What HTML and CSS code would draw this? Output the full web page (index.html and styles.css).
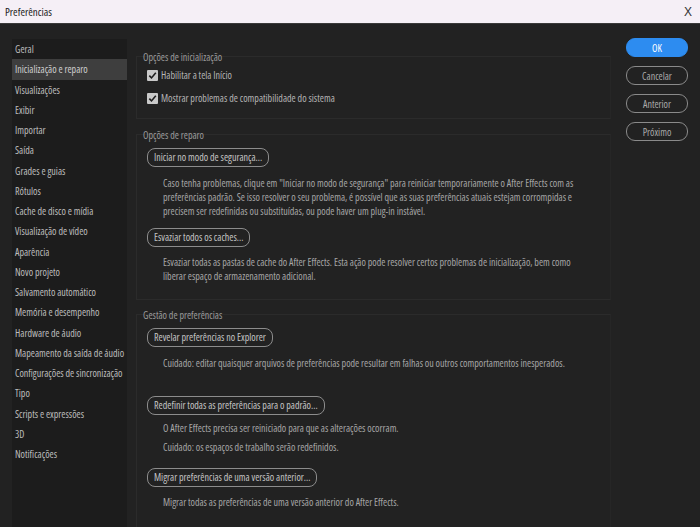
FILE: index.html
```html
<!DOCTYPE html>
<html lang="pt">
<head>
<meta charset="utf-8">
<title>Preferências</title>
<link rel="stylesheet" href="styles.css">
</head>
<body>
<div class="window">
  <header class="titlebar">
    <span class="title">Preferências</span>
    <span class="close">X</span>
  </header>
  <div class="content">
    <nav class="sidebar">
      <div class="nav-item">Geral</div>
      <div class="nav-item active">Inicialização e reparo</div>
      <div class="nav-item">Visualizações</div>
      <div class="nav-item">Exibir</div>
      <div class="nav-item">Importar</div>
      <div class="nav-item">Saída</div>
      <div class="nav-item">Grades e guias</div>
      <div class="nav-item">Rótulos</div>
      <div class="nav-item">Cache de disco e mídia</div>
      <div class="nav-item">Visualização de vídeo</div>
      <div class="nav-item">Aparência</div>
      <div class="nav-item">Novo projeto</div>
      <div class="nav-item">Salvamento automático</div>
      <div class="nav-item">Memória e desempenho</div>
      <div class="nav-item">Hardware de áudio</div>
      <div class="nav-item">Mapeamento da saída de áudio</div>
      <div class="nav-item">Configurações de sincronização</div>
      <div class="nav-item">Tipo</div>
      <div class="nav-item">Scripts e expressões</div>
      <div class="nav-item">3D</div>
      <div class="nav-item">Notificações</div>
    </nav>

    <main class="main">
      <section class="group group-startup">
        <h2 class="legend">Opções de inicialização</h2>
        <label class="check-row row-first"><span class="checkbox"><svg viewBox="0 0 11 11" width="11" height="11"><path d="M2.3 5.6 L4.5 7.9 L8.8 2.8" fill="none" stroke="#1e1e1e" stroke-width="1.6"/></svg></span>Habilitar a tela Início</label>
        <label class="check-row row-second"><span class="checkbox"><svg viewBox="0 0 11 11" width="11" height="11"><path d="M2.3 5.6 L4.5 7.9 L8.8 2.8" fill="none" stroke="#1e1e1e" stroke-width="1.6"/></svg></span>Mostrar problemas de compatibilidade do sistema</label>
      </section>

      <section class="group group-repair">
        <h2 class="legend">Opções de reparo</h2>
        <button class="pill pill-safe">Iniciar no modo de segurança...</button>
        <p class="desc desc-safe">Caso tenha problemas, clique em "Iniciar no modo de segurança" para reiniciar temporariamente o After Effects com as<br>preferências padrão. Se isso resolver o seu problema, é possível que as suas preferências atuais estejam corrompidas e<br>precisem ser redefinidas ou substituídas, ou pode haver um plug-in instável.</p>
        <button class="pill pill-cache">Esvaziar todos os caches...</button>
        <p class="desc desc-cache">Esvaziar todas as pastas de cache do After Effects. Esta ação pode resolver certos problemas de inicialização, bem como<br>liberar espaço de armazenamento adicional.</p>
      </section>

      <section class="group group-prefs">
        <h2 class="legend">Gestão de preferências</h2>
        <button class="pill pill-reveal">Revelar preferências no Explorer</button>
        <p class="desc desc-reveal">Cuidado: editar quaisquer arquivos de preferências pode resultar em falhas ou outros comportamentos inesperados.</p>
        <button class="pill pill-reset">Redefinir todas as preferências para o padrão...</button>
        <p class="desc desc-reset1">O After Effects precisa ser reiniciado para que as alterações ocorram.</p>
        <p class="desc desc-reset2">Cuidado: os espaços de trabalho serão redefinidos.</p>
        <button class="pill pill-migrate">Migrar preferências de uma versão anterior...</button>
        <p class="desc desc-migrate">Migrar todas as preferências de uma versão anterior do After Effects.</p>
      </section>
    </main>

    <aside class="actions">
      <button class="act act-primary">OK</button>
      <button class="act">Cancelar</button>
      <button class="act">Anterior</button>
      <button class="act">Próximo</button>
    </aside>
  </div>
</div>
</body>
</html>
```

FILE: styles.css
```css
* { box-sizing: border-box; }

html, body {
  margin: 0;
  padding: 0;
}

body {
  width: 700px;
  height: 527px;
  overflow: hidden;
  background: #222222;
  font-family: "Open Sans", "DejaVu Sans Condensed", sans-serif;
  font-stretch: 75%;
  font-size: 10px;
  color: #a8a8a8;
}

.window {
  display: flex;
  flex-direction: column;
  height: 527px;
}

.titlebar {
  height: 24px;
  flex: none;
  display: flex;
  align-items: center;
  justify-content: space-between;
  padding: 0 8px 0 5px;
  background: #f5eff6;
  border-bottom: 1px solid #3a3a3a;
  color: #222;
}

.title {
  font-size: 11px;
}

.close {
  font-family: "Liberation Sans", sans-serif;
  font-stretch: 100%;
  font-size: 12px;
  color: #333;
}

.content {
  flex: 1;
  display: flex;
  min-height: 0;
}

/* Sidebar */
.sidebar {
  width: 115px;
  margin-left: 12px;
  margin-top: 15px;
  background: #1c1c1c;
  flex: none;
}

.nav-item {
  height: 20.25px;
  line-height: 20.25px;
  padding-left: 3px;
  color: #bcbcbc;
  white-space: nowrap;
}

.nav-item.active {
  background: #3e3e3e;
  color: #cfcfcf;
}

/* Main */
.main {
  flex: none;
  width: 475px;
  margin-left: 9px;
  padding-top: 32px;
  display: flex;
  flex-direction: column;
}

.group {
  border: 1px solid #2b2b2b;
  border-right-color: #262626;
  padding-left: 6px;
  flex: none;
}

.group-startup {
  height: 63px;
  margin-bottom: 15px;
}

.group-repair {
  height: 166px;
  margin-bottom: 14px;
}

.group-prefs {
  flex: 1;
  border-bottom: none;
  min-height: 0;
}

.legend {
  margin: -6px 0 0 0;
  height: 12px;
  line-height: 12px;
  font-size: 10px;
  font-weight: normal;
  color: #9a9a9a;
}

.check-row {
  display: flex;
  align-items: center;
  gap: 3px;
  height: 16px;
  padding-left: 4px;
  color: #b4b4b4;
}

.row-first { margin-top: 4px; }
.row-second { margin-top: 7px; }

.checkbox {
  width: 11px;
  height: 11px;
  background: #c9c9c9;
  border-radius: 1px;
  display: flex;
}

.pill {
  display: block;
  height: 19px;
  margin-left: 4px;
  padding: 0 6px;
  border: 1.5px solid #8c8c8c;
  border-radius: 8px;
  background: transparent;
  color: #c4c4c4;
  font-family: inherit;
  font-stretch: inherit;
  font-weight: 400;
  font-size: 10px;
  line-height: 15px;
  white-space: nowrap;
}

.pill-safe { margin-top: 7px; }
.pill-cache { margin-top: 10px; }
.pill-reveal { margin-top: 7px; }
.pill-reset { margin-top: 26px; }
.pill-migrate { margin-top: 14px; }

.desc {
  margin: 0;
  padding-left: 20px;
  line-height: 14px;
  color: #a6a6a6;
  white-space: nowrap;
}

.desc-safe { margin-top: 9px; }
.desc-cache { margin-top: 8px; }
.desc-reveal { margin-top: 9px; }
.desc-reset1 { margin-top: 6px; }
.desc-reset2 { margin-top: 5px; }
.desc-migrate { margin-top: 8px; }

/* Right actions */
.actions {
  margin-left: auto;
  margin-right: 12px;
  padding-top: 14px;
  width: 62px;
  display: flex;
  flex-direction: column;
  gap: 9px;
}

.act {
  height: 19px;
  border: 1.5px solid #8a8a8a;
  border-radius: 9px;
  background: transparent;
  color: #a9a9a9;
  font-family: inherit;
  font-stretch: inherit;
  font-weight: 400;
  font-size: 10px;
  padding: 0;
}

.act-primary {
  background: #2d8cf0;
  border-color: #2d8cf0;
  color: #ffffff;
}
```
